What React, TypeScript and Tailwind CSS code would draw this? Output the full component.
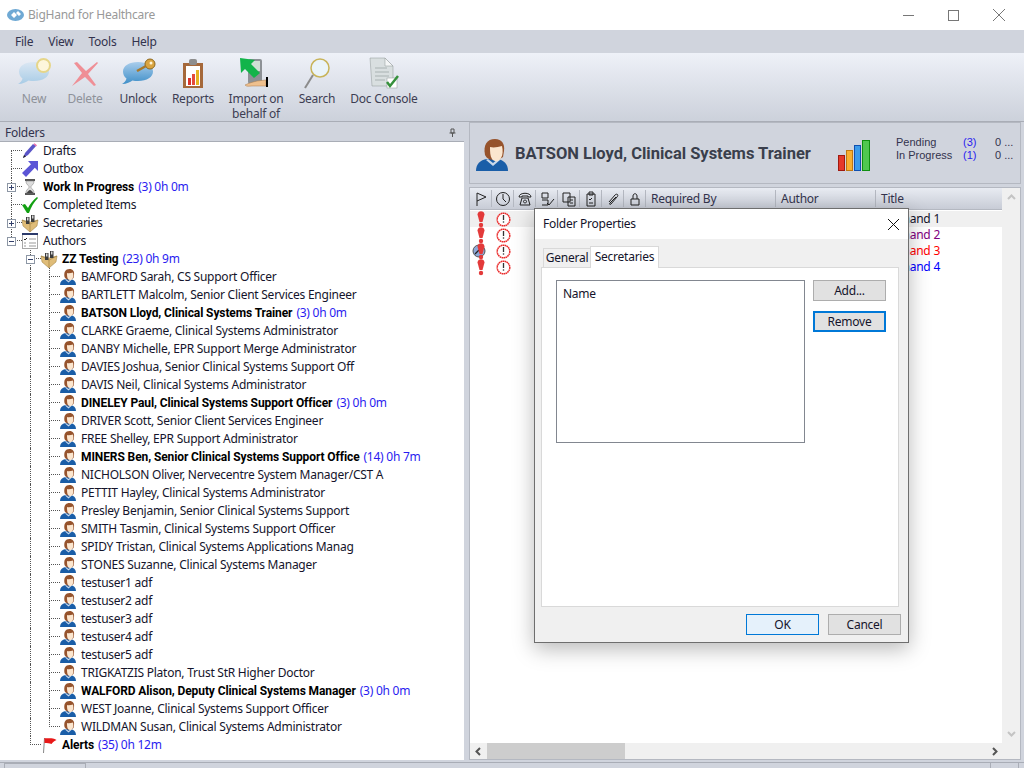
import React from 'react';

type Node = {
  label: string;
  depth: 0 | 1 | 2;
  icon: React.ReactNode;
  bold?: boolean;
  stats?: string;
  expander?: '+' | '-';
  first?: boolean;
  last?: boolean;
};

function Person({ size = 16 }: { size?: number }) {
  return (
    <svg width={size} height={size} viewBox="0 0 32 32" className="shrink-0">
      <path d="M0 32c0-7 4-11 11-12h10c7 1 11 5 11 12z" fill="#1a5ea8" />
      <path d="M12 20l5 4 5-4 2 1-7 6-7-6z" fill="#c9d8ea" />
      <path d="M9 16C7 6 11 0 19 0c7 0 10 5 9 12l-1 6c-3 2-5 3-8 3-5 0-8-1-10-5z" fill="#96532c" />
      <path d="M14 8c4 1 8 0 12-1 1 4 1 9-1 12-2 4-7 4-9 1-2-3-2-8-2-12z" fill="#fbe6cf" />
    </svg>
  );
}

function Pencil() {
  return (
    <svg width="16" height="16" viewBox="0 0 16 16" className="shrink-0">
      <path d="M1 15l2-5 8-9 3 2-8 9z" fill="#5a55c8" />
      <path d="M11.500 1l1-.8 2.500 2-1 1.200z" fill="#e86aa8" />
      <path d="M1 15l1-3 2 1.500z" fill="#222" />
    </svg>
  );
}

function OutboxArrow() {
  return (
    <svg width="16" height="16" viewBox="0 0 16 16" className="shrink-0">
      <path d="M6 0h10v10l-3.200-3.200L4 16 0 12l9-8.800z" fill="#5b55d6" />
    </svg>
  );
}

function Hourglass() {
  return (
    <svg width="16" height="16" viewBox="0 0 16 16" className="shrink-0">
      <path d="M3 0h10v2H3zM3 14h10v2H3z" fill="#555" />
      <path d="M4 2h8c0 4-3 4-3 6s3 2 3 6H4c0-4 3-4 3-6S4 6 4 2z" fill="#dcdcdc" stroke="#777" strokeWidth=".5" />
      <path d="M5 14c0-1 2-3 3-3s3 2 3 3z" fill="#444" />
    </svg>
  );
}

function Check() {
  return (
    <svg width="16" height="16" viewBox="0 0 16 16" className="shrink-0">
      <path d="M0 8l3-1 3 4c2-4 5-8 9-11l1 1c-4 4-7 9-9 15H5z" fill="#12a012" />
    </svg>
  );
}

function Crate() {
  return (
    <svg width="18" height="18" viewBox="0 0 18 18" className="shrink-0">
      <path d="M9 8l8-2-1 6-7 6-7-6-1-6z" fill="#dfbc78" stroke="#9a7a3a" strokeWidth=".5" />
      <path d="M9 18v-8l8-4M9 10L1 6" fill="none" stroke="#9a7a3a" strokeWidth=".6" />
      <path d="M5 3h3.500v7H5zM10 1h3.500v7H10z" fill="#3c3c3c" />
      <path d="M6 3.500h1.500v3H6zM11 1.500h1.500v3H11z" fill="#d6d6d6" />
    </svg>
  );
}

function Checklist() {
  return (
    <svg width="16" height="16" viewBox="0 0 16 16" className="shrink-0">
      <rect x=".5" y=".5" width="15" height="15" fill="#fff" stroke="#a8a8a8" />
      <rect x="0" y="0" width="16" height="2" fill="#2b3a6b" />
      <path d="M2 6l1 1 2-2" fill="none" stroke="#222" />
      <path d="M7 6h7M2 10h2M7 10h7M2 13h2M7 13h7" stroke="#999" />
    </svg>
  );
}

function RedFlag() {
  return (
    <svg width="16" height="16" viewBox="0 0 16 16" className="shrink-0">
      <path d="M2.500 16L3.500 1" stroke="#888" />
      <path d="M3.500 1c3 1 7-1 12 2-3 1-4 3-5 4-2-1-4-1-7-1z" fill="#e81818" />
    </svg>
  );
}

const authors: [string, string?][] = [
  ['BAMFORD Sarah, CS Support Officer'],
  ['BARTLETT Malcolm, Senior Client Services Engineer'],
  ['BATSON Lloyd, Clinical Systems Trainer', '(3) 0h 0m'],
  ['CLARKE Graeme, Clinical Systems Administrator'],
  ['DANBY Michelle, EPR Support Merge Administrator'],
  ['DAVIES Joshua, Senior Clinical Systems Support Off'],
  ['DAVIS Neil, Clinical Systems Administrator'],
  ['DINELEY Paul, Clinical Systems Support Officer', '(3) 0h 0m'],
  ['DRIVER Scott, Senior Client Services Engineer'],
  ['FREE Shelley, EPR Support Administrator'],
  ['MINERS Ben, Senior Clinical Systems Support Office', '(14) 0h 7m'],
  ['NICHOLSON Oliver, Nervecentre System Manager/CST A'],
  ['PETTIT Hayley, Clinical Systems Administrator'],
  ['Presley Benjamin, Senior Clinical Systems Support'],
  ['SMITH Tasmin, Clinical Systems Support Officer'],
  ['SPIDY Tristan, Clinical Systems Applications Manag'],
  ['STONES Suzanne, Clinical Systems Manager'],
  ['testuser1 adf'],
  ['testuser2 adf'],
  ['testuser3 adf'],
  ['testuser4 adf'],
  ['testuser5 adf'],
  ['TRIGKATZIS Platon, Trust StR Higher Doctor'],
  ['WALFORD Alison, Deputy Clinical Systems Manager', '(3) 0h 0m'],
  ['WEST Joanne, Clinical Systems Support Officer'],
  ['WILDMAN Susan, Clinical Systems Administrator'],
];

const tree: Node[] = [
  { label: 'Drafts', depth: 0, icon: <Pencil />, first: true },
  { label: 'Outbox', depth: 0, icon: <OutboxArrow /> },
  { label: 'Work In Progress', depth: 0, icon: <Hourglass />, bold: true, stats: '(3) 0h 0m', expander: '+' },
  { label: 'Completed Items', depth: 0, icon: <Check /> },
  { label: 'Secretaries', depth: 0, icon: <Crate />, expander: '+' },
  { label: 'Authors', depth: 0, icon: <Checklist />, expander: '-', last: true },
  { label: 'ZZ Testing', depth: 1, icon: <Crate />, bold: true, stats: '(23) 0h 9m', expander: '-' },
  ...authors.map(([label, stats], i): Node => ({
    label,
    depth: 2,
    icon: <Person />,
    bold: !!stats,
    stats,
    last: i === authors.length - 1,
  })),
  { label: 'Alerts', depth: 1, icon: <RedFlag />, bold: true, stats: '(35) 0h 12m', last: true },
];

function TreeRow({ node }: { node: Node }) {
  return (
    <div className="flex h-[18px] items-stretch">
      {node.depth >= 1 && <div className="w-[19px] shrink-0" />}
      {node.depth === 2 && (
        <div className="w-[19px] shrink-0 pl-[11px]">
          <div className="h-full border-l border-dotted border-[#555]" />
        </div>
      )}
      <div className="relative flex w-[22px] shrink-0 flex-col pl-[11px]">
        <div className={`h-[9px] border-b border-dotted border-[#555] ${node.first ? '' : 'border-l'}`} />
        {!node.last && <div className="flex-1 border-l border-dotted border-[#555]" />}
        {node.expander && (
          <div className="absolute left-[7px] top-[5px] flex h-[9px] w-[9px] items-center justify-center border border-[#8d97a5] bg-white">
            <div className="relative h-[1px] w-[5px] bg-[#33406b]">
              {node.expander === '+' && <div className="absolute left-[2px] top-[-2px] h-[5px] w-[1px] bg-[#33406b]" />}
            </div>
          </div>
        )}
      </div>
      <div className="flex w-[16px] shrink-0 items-center justify-center">{node.icon}</div>
      <div className="ml-[5px] flex items-center gap-[4px] whitespace-nowrap text-[#14142b]">
        <span className={node.bold ? "font-['Roboto',sans-serif] font-bold tracking-[-0.1px] text-black" : ''}>{node.label}</span>
        {node.stats && <span className="text-[#2a1cf0]">{node.stats}</span>}
      </div>
    </div>
  );
}

function ToolButton({ label, icon, muted, width }: { label: React.ReactNode; icon: React.ReactNode; muted?: boolean; width: string }) {
  return (
    <div className={`flex flex-col items-center ${width}`}>
      <div className="flex h-[35px] items-center justify-center">{icon}</div>
      <div className={`whitespace-nowrap text-center leading-[15px] ${muted ? 'text-[#8e929a]' : 'text-[#3d3d52]'}`}>{label}</div>
    </div>
  );
}

function Bubble({ muted }: { muted?: boolean }) {
  return (
    <svg width="32" height="24" viewBox="0 0 32 24">
      <defs>
        <linearGradient id={muted ? 'bm' : 'bu'} x1="0" y1="0" x2="0" y2="1">
          <stop offset="0" stopColor={muted ? '#dbe7f3' : '#a9cdec'} />
          <stop offset="1" stopColor={muted ? '#a8cce6' : '#3f8fc8'} />
        </linearGradient>
      </defs>
      <path d="M16 1c9 0 15 4 15 9.500S25 20 16 20c-2 0-4 0-5.500-.5C8 21 5 23 0 23c2-1 4-3 4.500-5.500C2 15.500 1 13 1 10.500 1 5 7 1 16 1z" fill={`url(#${muted ? 'bm' : 'bu'})`} />
    </svg>
  );
}

function NewIcon() {
  return (
    <div className="relative h-[26px] w-[32px]">
      <Bubble muted />
      <div className="absolute right-[-1px] top-[-3px] h-[15px] w-[15px] rounded-full border-2 border-[#e6d68a] bg-[#fdf6dc]" />
    </div>
  );
}

function UnlockIcon() {
  return (
    <div className="relative h-[26px] w-[32px]">
      <Bubble />
      <svg width="20" height="14" viewBox="0 0 20 14" className="absolute right-[-2px] top-[-3px]">
        <circle cx="14" cy="6" r="5" fill="#d9a441" stroke="#8f6a20" />
        <circle cx="15" cy="5" r="1.500" fill="#fff6d8" />
        <path d="M10 8L1 13" stroke="#a8782a" strokeWidth="2.500" />
      </svg>
    </div>
  );
}

function DeleteIcon() {
  return (
    <svg width="28" height="26" viewBox="0 0 28 26">
      <path d="M3 2l3-1 9 9 11-9 1 1-10 11 8 11-2 1-9-9L1 25l10-13z" fill="#ef8f96" />
    </svg>
  );
}

function ReportsIcon() {
  return (
    <svg width="22" height="30" viewBox="0 0 22 30">
      <rect x="1" y="4" width="20" height="25" fill="#a5683a" />
      <rect x="4" y="7" width="14" height="20" fill="#fff" />
      <rect x="7" y="0" width="8" height="6" rx="2" fill="#8e8e8e" />
      <rect x="6" y="19" width="3" height="7" fill="#d9332c" />
      <rect x="10" y="15" width="3" height="11" fill="#e44b3a" />
      <rect x="14" y="11" width="3" height="15" fill="#e6b41f" />
    </svg>
  );
}

function ImportIcon() {
  return (
    <svg width="32" height="32" viewBox="0 0 32 32">
      <rect x="8" y="1" width="14" height="25" rx="2" fill="#8d9196" />
      <rect x="11" y="3" width="9" height="10" fill="#cfe0d4" />
      <path d="M0 0l15 2-4 4 9 9-6 5-9-9-4 4z" fill="#12b44a" />
      <path d="M5 27c4-2 8-3 12-4l9-1v6H12c-3 0-5 1-7-1z" fill="#efc08e" stroke="#a87a4c" strokeWidth=".5" />
      <rect x="26" y="19" width="2" height="10" fill="#000" />
    </svg>
  );
}

function SearchIcon() {
  return (
    <svg width="26" height="32" viewBox="0 0 26 32">
      <circle cx="16" cy="10" r="9" fill="#eaf4fa" stroke="#c8b45a" strokeWidth="1.500" />
      <path d="M9 17L1 30" stroke="#8b8b8b" strokeWidth="2" />
    </svg>
  );
}

function DocConsoleIcon() {
  return (
    <svg width="32" height="34" viewBox="0 0 32 34">
      <path d="M2 1h15l8 8v20H4z" fill="#d9dfe0" stroke="#8e9696" strokeWidth=".5" />
      <path d="M17 1l8 8h-8z" fill="#f4f6f6" stroke="#8e9696" strokeWidth=".5" />
      <path d="M7 11h12M7 15h14M7 19h14M7 23h10" stroke="#a9b2b2" />
      <rect x="19" y="21" width="10" height="10" fill="#fff" stroke="#8e9696" strokeWidth=".5" />
      <path d="M19 25l3 4 8-10" fill="none" stroke="#36903c" strokeWidth="2.500" />
    </svg>
  );
}

function PriorityMark() {
  return (
    <svg width="8" height="17" viewBox="0 0 8 17" className="relative">
      <path d="M.5 3.500c0-4.500 7-4.500 7 0l-2 7.500h-3z" fill="#e33a3a" />
      <circle cx="4" cy="14" r="2.200" fill="#e33a3a" />
    </svg>
  );
}

function Gauge() {
  return (
    <svg width="14" height="14" viewBox="0 0 14 14" className="absolute left-[2px] top-[1px]">
      <circle cx="7" cy="7" r="6" fill="#8ea8d8" stroke="#555" />
      <path d="M3 10l4-4" stroke="#222" strokeWidth="1.200" />
    </svg>
  );
}

function RedClock() {
  return (
    <svg width="15" height="15" viewBox="0 0 15 15">
      <circle cx="7.500" cy="7.500" r="6.300" fill="#fff" stroke="#ea2a2a" strokeWidth="1.500" strokeDasharray="1.600 .4" />
      <path d="M7.500 3v5" stroke="#333" strokeWidth="1.300" />
      <circle cx="7.500" cy="10" r=".8" fill="#333" />
    </svg>
  );
}

function ColIcon({ d, box }: { d: string; box?: boolean }) {
  return (
    <svg width="16" height="16" viewBox="0 0 16 16" fill="none" stroke="#222" strokeWidth="1">
      <path d={d} />
      {box && <circle cx="8" cy="8" r="6.500" />}
    </svg>
  );
}

const headerIcons: { d: string; box?: boolean }[] = [
  { d: 'M4 15V2l9 4-9 4' },
  { d: 'M8 3v5l3 3', box: true },
  { d: 'M2 6c0-5 12-5 12 0h-3V5H5v1zM5 7h6l2 7H3zM8 9a1.500 1.500 0 1 0 .01 0' },
  { d: 'M3 2h6v5H3zM3 9h6v5H3M8 12l2 2 5-6' },
  { d: 'M2 2h7v9H2zM7 6h7v9H7zM9 9h3M9 12h3' },
  { d: 'M4 3h8v12H4zM6 1h4v3H6zM6 8l1 1 2-2M6 12h4' },
  { d: 'M4 11l6-7c2-2 4 0 2 2l-6 7c-1 1-2 0-1-1l6-6' },
  { d: 'M4 8h8v6H4zM6 8V5c0-3 4-3 4 0v3' },
];

const messages: { color: string; gauge?: boolean; selected?: boolean }[] = [
  { color: 'text-[#14142b]', selected: true },
  { color: 'text-[#800080]' },
  { color: 'text-[#ff0000]', gauge: true },
  { color: 'text-[#0000ff]' },
];

function DialogButton({ label, className }: { label: string; className: string }) {
  return <div className={`flex items-center justify-center text-[#14142b] ${className}`}>{label}</div>;
}

export default function App() {
  return (
    <div className="relative flex h-[768px] w-[1024px] flex-col overflow-hidden bg-[#d0d4dd] text-[12px] tracking-[-0.25px] font-['Noto_Sans',sans-serif]">
      {/* title bar */}
      <div className="flex h-[30px] shrink-0 items-center bg-white pl-[7px]">
        <svg width="17" height="12" viewBox="0 0 17 12">
          <ellipse cx="8.500" cy="6" rx="8.500" ry="6" fill="#6fa9d4" />
          <path d="M4 6l3-3 3 3-3 3zM9 4l2-2 3 3-2 2z" fill="#fff" />
        </svg>
        <span className="ml-[4px] text-[#999]">BigHand for Healthcare</span>
        <div className="ml-auto flex items-center gap-[34px] pr-[19px]">
          <div className="h-[1px] w-[11px] bg-[#777]" />
          <div className="h-[11px] w-[11px] border border-[#777]" />
          <svg width="12" height="12" viewBox="0 0 12 12" stroke="#777">
            <path d="M0 0l12 12M12 0L0 12" />
          </svg>
        </div>
      </div>

      {/* menu */}
      <div className="flex h-[23px] shrink-0 items-center gap-[15px] pl-[15px] text-[#33334d]">
        <span>File</span>
        <span>View</span>
        <span>Tools</span>
        <span>Help</span>
      </div>

      {/* toolbar */}
      <div className="flex h-[69px] shrink-0 items-start border-b border-[#a9adb6] bg-gradient-to-b from-[#eef1f8] to-[#ccd1db] pl-[8px] pt-[3px]">
        <ToolButton width="w-[52px]" label="New" muted icon={<NewIcon />} />
        <ToolButton width="w-[50px]" label="Delete" muted icon={<DeleteIcon />} />
        <ToolButton width="w-[54px] ml-[1px]" label="Unlock" icon={<UnlockIcon />} />
        <ToolButton width="w-[52px] ml-[2px]" label="Reports" icon={<ReportsIcon />} />
        <ToolButton width="w-[66px] ml-[4px]" label={<>Import on<br />behalf of</>} icon={<ImportIcon />} />
        <ToolButton width="w-[44px] ml-[6px]" label="Search" icon={<SearchIcon />} />
        <ToolButton width="w-[70px] ml-[10px]" label="Doc Console" icon={<DocConsoleIcon />} />
      </div>

      {/* main */}
      <div className="flex min-h-0 flex-1">
        {/* folders */}
        <div className="flex w-[464px] shrink-0 flex-col">
          <div className="flex h-[20px] shrink-0 items-center justify-between border-b border-[#a9adb6] px-[5px] pt-[2px] text-[#33334d]">
            <span>Folders</span>
            <svg width="9" height="9" viewBox="0 0 9 9" stroke="#555" fill="none" className="mr-[2px]">
              <path d="M3 1h3v4H3zM1.500 5h6M4.500 5v4" />
            </svg>
          </div>
          <div className="min-h-0 flex-1 overflow-hidden bg-white">
            {tree.map((node) => (
              <TreeRow key={node.label} node={node} />
            ))}
          </div>
        </div>

        {/* document pane */}
        <div className="ml-[5px] flex min-w-0 flex-1 flex-col pr-[3px]">
          <div className="flex h-[62px] shrink-0 items-center border border-[#b4b8c1] pl-[6px] pt-[3px] text-[#33334d]">
            <Person size={32} />
            <span className="ml-[7px] w-[323px] shrink-0 whitespace-nowrap font-['Roboto',sans-serif] text-[16.500px] font-bold leading-none tracking-normal text-[#3a3f4c]">BATSON Lloyd, Clinical Systems Trainer</span>
            <svg width="32" height="32" viewBox="0 0 32 32" className="shrink-0">
              <rect x=".5" y="16.500" width="6" height="15" fill="#e53a2a" stroke="#a01a10" />
              <rect x="8.500" y="11.500" width="6" height="20" fill="#f8b030" stroke="#c07810" />
              <rect x="16.500" y="6.500" width="6" height="25" fill="#3c9bea" stroke="#1050b0" />
              <rect x="24.500" y="1.500" width="7" height="30" fill="#50c850" stroke="#109010" />
            </svg>
            <div className="mb-[11px] ml-[26px] grid grid-cols-[67px_32px_30px] whitespace-nowrap font-['Liberation_Sans',sans-serif] text-[11px] leading-[13px] tracking-normal">
              <span>Pending</span>
              <span className="text-[#2a1cf0]">(3)</span>
              <span>0 ...</span>
              <span>In Progress</span>
              <span className="text-[#2a1cf0]">(1)</span>
              <span>0 ...</span>
            </div>
          </div>

          <div className="mt-[3px] flex min-h-0 flex-1 flex-col border border-[#b4b8c1] bg-white">
            <div className="flex min-h-0 flex-1">
              <div className="flex min-w-0 flex-1 flex-col">
                <div className="mb-[1px] flex h-[22px] shrink-0 items-center border-b border-[#b4b8c1] bg-gradient-to-b from-[#e8ebf2] to-[#c8ccd6] text-[#33334d]">
                  {headerIcons.map((icon, i) => (
                    <div key={i} className="flex h-[17px] w-[22px] items-center justify-center border-r border-[#b4b8c1]">
                      <ColIcon d={icon.d} box={icon.box} />
                    </div>
                  ))}
                  <div className="flex h-[17px] w-[130px] items-center border-r border-[#b4b8c1] pl-[5px]">Required By</div>
                  <div className="flex h-[17px] w-[100px] items-center border-r border-[#b4b8c1] pl-[5px]">Author</div>
                  <div className="pl-[5px]">Title</div>
                </div>
                {messages.map((m, i) => (
                  <div key={i} className={`flex h-[16px] items-center ${m.selected ? 'bg-[#f0f0f0]' : ''}`}>
                    <div className="relative flex w-[22px] justify-center">
                      {m.gauge && <Gauge />}
                      <PriorityMark />
                    </div>
                    <div className="flex w-[22px] justify-center"><RedClock /></div>
                    <div className={`ml-[358px] whitespace-nowrap pl-[6px] ${m.color}`}>Test hand {i + 1}</div>
                  </div>
                ))}
              </div>
              <div className="flex w-[18px] shrink-0 flex-col items-center justify-between bg-[#f0f0f0] py-[6px]">
                <svg width="9" height="6" viewBox="0 0 9 6" fill="none" stroke="#c4c4c4" strokeWidth="2"><path d="M1 5l3.500-3.500L8 5" /></svg>
                <svg width="9" height="6" viewBox="0 0 9 6" fill="none" stroke="#c4c4c4" strokeWidth="2"><path d="M1 1l3.500 3.500L8 1" /></svg>
              </div>
            </div>
            <div className="flex h-[16px] shrink-0 items-center bg-[#f0f0f0] pl-[5px] pr-[22px]">
              <svg width="6" height="9" viewBox="0 0 6 9" fill="none" stroke="#555" strokeWidth="2"><path d="M5 1L1.500 4.500 5 8" /></svg>
              <div className="ml-[6px] h-full w-[138px] bg-[#cdcdcd]" />
              <svg width="6" height="9" viewBox="0 0 6 9" fill="none" stroke="#555" strokeWidth="2" className="ml-auto"><path d="M1 1l3.500 3.500L1 8" /></svg>
            </div>
          </div>
        </div>
      </div>

      {/* status */}
      <div className="mt-[2px] flex h-[6px] shrink-0 border-t border-[#a9adb6]">
        <div className="ml-[4px] w-[82px] border-x border-t border-[#a9adb6]" />
        <div className="ml-auto mr-[5px] w-[29px] border-x border-[#a9adb6]" />
      </div>

      {/* dialog */}
      <div className="absolute left-[534px] top-[208px] flex h-[435px] w-[375px] flex-col border border-[#6e6e6e] bg-[#f0f0f0] shadow-[0_6px_20px_rgba(0,0,0,0.28)]">
        <div className="flex h-[30px] shrink-0 items-center justify-between bg-white pl-[8px] pr-[9px] text-[#14142b]">
          <span>Folder Properties</span>
          <svg width="11" height="11" viewBox="0 0 11 11" stroke="#111"><path d="M0 0l11 11M11 0L0 11" /></svg>
        </div>
        <div className="flex h-[28px] shrink-0 items-end pl-[8px] text-[#14142b]">
          <div className="flex h-[19px] w-[47px] items-center justify-center border-l border-t border-[#d9d9d9]">General</div>
          <div className="relative z-10 mb-[-1px] flex h-[22px] w-[69px] items-center justify-center border-x border-t border-[#d9d9d9] bg-white pb-[2px]">Secretaries</div>
        </div>
        <div className="ml-[6px] flex h-[340px] w-[358px] shrink-0 items-start border border-[#d9d9d9] bg-white pl-[14px] pt-[12px]">
          <div className="h-[163px] w-[249px] border border-[#828790] pl-[6px] pt-[4px] text-[#14142b]">Name</div>
          <div className="ml-[8px] flex flex-col gap-[10px]">
            <DialogButton label="Add..." className="h-[21px] w-[73px] border border-[#adadad] bg-[#e1e1e1]" />
            <DialogButton label="Remove" className="h-[21px] w-[73px] border-2 border-[#0078d7] bg-[#e1e1e1]" />
          </div>
        </div>
        <div className="flex justify-end gap-[9px] pr-[7px] pt-[7px]">
          <DialogButton label="OK" className="h-[21px] w-[73px] border border-[#0078d7] bg-[#e5f1fb]" />
          <DialogButton label="Cancel" className="h-[21px] w-[73px] border border-[#adadad] bg-[#e1e1e1]" />
        </div>
      </div>
    </div>
  );
}
